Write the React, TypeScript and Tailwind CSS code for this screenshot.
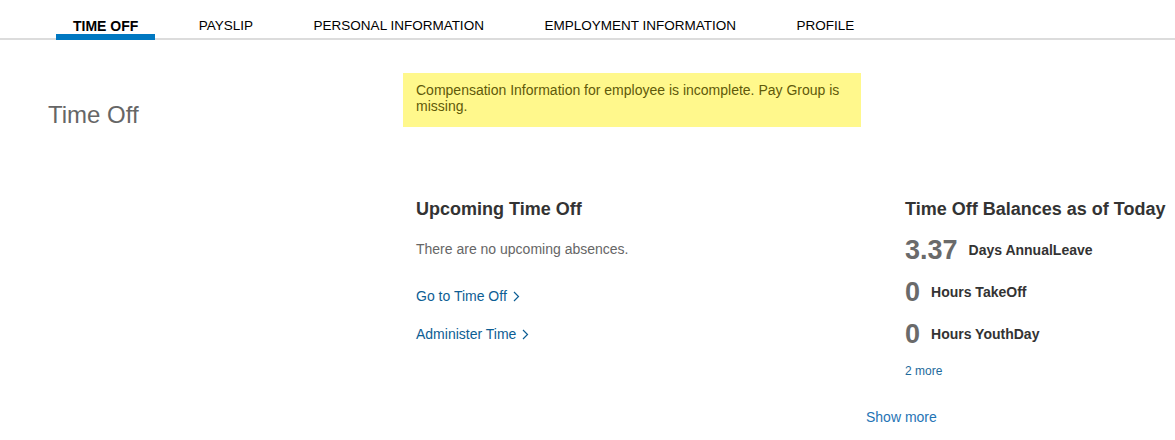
import React from "react";

const Chevron = () => (
  <svg width="7" height="11" viewBox="0 0 7 11" className="ml-[6px] inline-block" fill="none">
    <path d="M1 1 L5.5 5.5 L1 10" stroke="currentColor" strokeWidth="1.2" />
  </svg>
);

const tabs = ["TIME OFF", "PAYSLIP", "PERSONAL INFORMATION", "EMPLOYMENT INFORMATION", "PROFILE"];

export default function App() {
  return (
    <div className="w-[1175px] h-[440px] bg-white overflow-hidden" style={{ fontFamily: '"Liberation Sans", Arial, sans-serif' }}>
      <div className="flex h-[40px] border-b-2 border-[#dcdcdc] pl-[56px] gap-[26.5px]">
        {tabs.map((t, i) => (
          <div
            key={t}
            className={
              "h-[40px] -mb-[2px] px-[17px] pt-[18px] leading-[16px] text-black " +
              (i === 0 ? "text-[14px] font-bold border-b-[6px] border-[#0078c1]" : "text-[13.5px]")
            }
          >
            {t}
          </div>
        ))}
      </div>
      <div className="flex">
        <div className="w-[403px] pl-[48px] pt-[61px]">
          <div className="text-[24px] leading-[28px] text-[#666]">Time Off</div>
        </div>
        <div className="flex-1 pt-[33px]">
          <div className="w-[458px] bg-[#fff88c] px-[13px] pt-[9px] pb-[13px] text-[14px] leading-[16px] text-[#5f5a0a]">
            Compensation Information for employee is incomplete. Pay Group is missing.
          </div>
          <div className="flex mt-[71px]">
            <div className="w-[489px] pl-[13px]">
              <div className="text-[18px] leading-[22px] font-bold text-[#333]">Upcoming Time Off</div>
              <div className="mt-[20px] text-[14px] leading-[18px] text-[#666]">There are no upcoming absences.</div>
              <div className="mt-[29px] text-[14px] leading-[18px] text-[#0d5e94] flex items-center">
                Go to Time Off
                <Chevron />
              </div>
              <div className="mt-[20px] text-[14px] leading-[18px] text-[#0d5e94] flex items-center">
                Administer Time
                <Chevron />
              </div>
            </div>
            <div className="flex-1 pl-[13px]">
              <div className="text-[18px] leading-[22px] font-bold text-[#333] whitespace-nowrap">Time Off Balances as of Today</div>
              <div className="mt-[14px] flex flex-col gap-[10px]">
                {[
                  ["3.37", "Days AnnualLeave"],
                  ["0", "Hours TakeOff"],
                  ["0", "Hours YouthDay"],
                ].map(([n, l]) => (
                  <div key={l} className="flex items-center gap-[11px] h-[32px]">
                    <span className="text-[27px] leading-[32px] font-bold text-[#6a6a6a]">{n}</span>
                    <span className="text-[14px] leading-[18px] font-bold text-[#333]">{l}</span>
                  </div>
                ))}
              </div>
              <div className="mt-[13px] text-[12px] leading-[16px] text-[#1d6a9c]">2 more</div>
            </div>
          </div>
          <div className="mt-[29px] pl-[463px] text-[14px] leading-[18px] text-[#1f74b5]">Show more</div>
        </div>
      </div>
    </div>
  );
}
